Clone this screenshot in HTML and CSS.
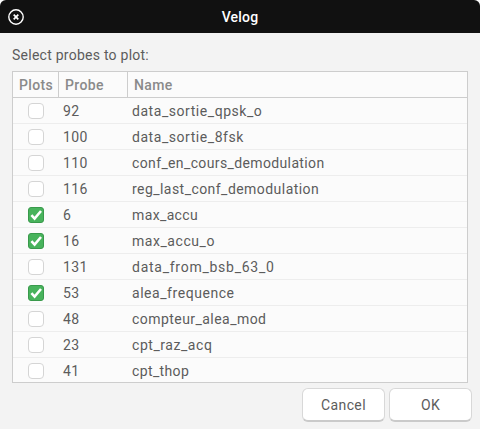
FILE: index.html
```html
<!DOCTYPE html>
<html lang="en">
<head>
<meta charset="utf-8">
<title>Velog</title>
<link rel="stylesheet" href="styles.css">
</head>
<body>
<div class="window">
  <header class="titlebar">
    <svg class="close" width="16" height="16" viewBox="0 0 16 16"><circle cx="8" cy="8" r="7.2"/><path d="M5.7 5.7l4.6 4.6M10.3 5.7l-4.6 4.6"/></svg>
    <h1>Velog</h1>
  </header>
  <main class="content">
    <p class="prompt">Select probes to plot:</p>
    <div class="table">
      <div class="row head"><span>Plots</span><span>Probe</span><span class="h-name">Name</span></div>
      <div class="row"><i class="box"></i><span>92</span><span class="wide">data_sortie_qpsk_o</span></div>
      <div class="row"><i class="box"></i><span>100</span><span class="wide">data_sortie_8fsk</span></div>
      <div class="row"><i class="box"></i><span>110</span><span>conf_en_cours_demodulation</span></div>
      <div class="row"><i class="box"></i><span>116</span><span class="semi">reg_last_conf_demodulation</span></div>
      <div class="row"><i class="box on"><svg viewBox="0 0 14 14"><path d="M2.4 7.2l3.2 3.4 6.4-7.6"/></svg></i><span>6</span><span>max_accu</span></div>
      <div class="row"><i class="box on"><svg viewBox="0 0 14 14"><path d="M2.4 7.2l3.2 3.4 6.4-7.6"/></svg></i><span>16</span><span class="wide">max_accu_o</span></div>
      <div class="row"><i class="box"></i><span>131</span><span class="extra">data_from_bsb_63_0</span></div>
      <div class="row"><i class="box on"><svg viewBox="0 0 14 14"><path d="M2.4 7.2l3.2 3.4 6.4-7.6"/></svg></i><span>53</span><span class="wide">alea_frequence</span></div>
      <div class="row"><i class="box"></i><span>48</span><span class="semi">compteur_alea_mod</span></div>
      <div class="row"><i class="box"></i><span>23</span><span class="wide">cpt_raz_acq</span></div>
      <div class="row"><i class="box"></i><span>41</span><span>cpt_thop</span></div>
    </div>
  </main>
  <footer class="actions"><button class="cancel">Cancel</button><button>OK</button></footer>
</div>
</body>
</html>
```
FILE: styles.css
```css
* { box-sizing: border-box; }
body { margin: 0; background: #fff; font: 14px/20px Roboto, "Open Sans", sans-serif; letter-spacing: .37px; color: #5c5c5c; overflow: hidden; }
.window { width: 480px; height: 429px; background: #f3f3f3; border-radius: 6px 6px 0 0; overflow: hidden; }
.titlebar { height: 33px; background: #111; color: #fff; display: grid; grid-template-columns: 32px 1fr 32px; align-items: center; }
.titlebar h1 { margin: 0; text-align: center; font-size: 14px; font-weight: 500; line-height: 20px; letter-spacing: .2px; }
.close { margin-left: 8px; fill: none; stroke: #fff; stroke-width: 1.4; }
.close path { stroke-width: 1.7; }
.content { padding: 12px 12px 0; }
.prompt { margin: 0 0 6px; height: 20px; letter-spacing: .25px; }
.table { width: 456px; height: 312px; border: 1px solid #cdcdcd; background: #fbfbfb; overflow: hidden; }
.row { height: 26px; border-bottom: 1px solid #ededed; display: grid; grid-template-columns: 46px 69px 1fr; align-items: center; }
.row span { padding-left: 4px; white-space: nowrap; }
.row .box { margin-left: 15px; }
.row .semi { letter-spacing: .45px; }
.row .wide { letter-spacing: .55px; }
.row .extra { letter-spacing: .74px; }
.head { border-color: #cdcdcd; color: #8a8a8a; font-weight: 500; }
.head span { height: 25px; line-height: 26px; padding-left: 6px; border-right: 1px solid #cdcdcd; }
.head .h-name { border: 0; }
.box { width: 16px; height: 16px; border: 1px solid #d5d5d5; border-radius: 4px; background: #fff; }
.box.on { background: #48b35c; border-color: #39994b; border-radius: 3px; }
.box svg { display: block; width: 14px; height: 14px; fill: none; stroke: #fff; stroke-width: 2.6; }
.actions { display: flex; justify-content: flex-end; gap: 4px; padding: 5px 8px 0; }
.actions button { width: 83px; height: 34px; padding: 0; border: 1px solid #d8d8d8; border-bottom: 2px solid #cacaca; border-radius: 6px; background: #fff; font: inherit; letter-spacing: inherit; color: inherit; }
```
